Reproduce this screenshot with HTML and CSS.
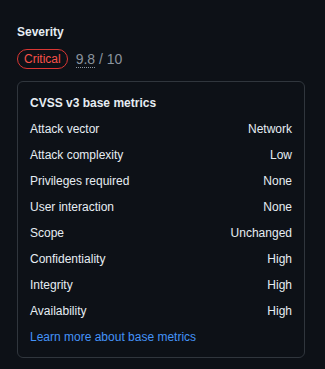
FILE: index.html
```html
<!DOCTYPE html>
<html lang="en">
<head>
    <meta charset="UTF-8">
    <meta name="viewport" content="width=device-width, initial-scale=1.0">
    <title>Severity</title>
    <link rel="stylesheet" href="styles.css">
</head>
<body>
    <div class="sidebar">
        <h3 class="section-title">Severity</h3>
        <div class="severity">
            <span class="label-critical">Critical</span>
            <span class="score"><span class="score-value">9.8</span> / 10</span>
        </div>

        <div class="metrics-box">
            <h4 class="metrics-title">CVSS v3 base metrics</h4>
            <dl class="metrics">
                <div class="metric"><dt>Attack vector</dt><dd>Network</dd></div>
                <div class="metric"><dt>Attack complexity</dt><dd>Low</dd></div>
                <div class="metric"><dt>Privileges required</dt><dd>None</dd></div>
                <div class="metric"><dt>User interaction</dt><dd>None</dd></div>
                <div class="metric"><dt>Scope</dt><dd>Unchanged</dd></div>
                <div class="metric"><dt>Confidentiality</dt><dd>High</dd></div>
                <div class="metric"><dt>Integrity</dt><dd>High</dd></div>
                <div class="metric"><dt>Availability</dt><dd>High</dd></div>
            </dl>
            <a class="metrics-link" href="#">Learn more about base metrics</a>
        </div>
    </div>
</body>
</html>
```

FILE: styles.css
```css
:root {
    --bg-color: #0d1117;
    --text-color: #e6edf3;
    --muted-color: #8b949e;
    --border-color: #30363d;
    --danger-color: #f85149;
    --danger-border: #da3633;
    --link-color: #4493f8;
}

body {
    font-family: 'Liberation Sans', Arial, sans-serif;
    font-size: 12px;
    line-height: 18px;
    color: var(--text-color);
    background-color: var(--bg-color);
    margin: 0;
    padding: 0;
}

.sidebar {
    padding: 23px 0 0 17px;
    width: 288px;
}

.section-title {
    margin: 0 0 8px;
    font-size: 12px;
    font-weight: 700;
}

.severity {
    display: flex;
    align-items: center;
    gap: 8px;
    margin-bottom: 12px;
}

.label-critical {
    display: inline-block;
    padding: 0 6px;
    line-height: 18px;
    color: var(--danger-color);
    border: 1px solid var(--danger-border);
    border-radius: 2em;
}

.score {
    font-size: 14px;
    color: var(--muted-color);
}

.score-value {
    border-bottom: 1px dotted var(--muted-color);
}

.metrics-box {
    border: 1px solid var(--border-color);
    border-radius: 6px;
    padding: 12px 12px 11px;
}

.metrics-title {
    margin: 0 0 8px;
    font-size: 12px;
    font-weight: 700;
}

.metrics {
    margin: 0;
}

.metric {
    display: flex;
    justify-content: space-between;
    margin-bottom: 8px;
}

.metric dt,
.metric dd {
    margin: 0;
}

.metrics-link {
    display: block;
    color: var(--link-color);
    text-decoration: none;
}
```
